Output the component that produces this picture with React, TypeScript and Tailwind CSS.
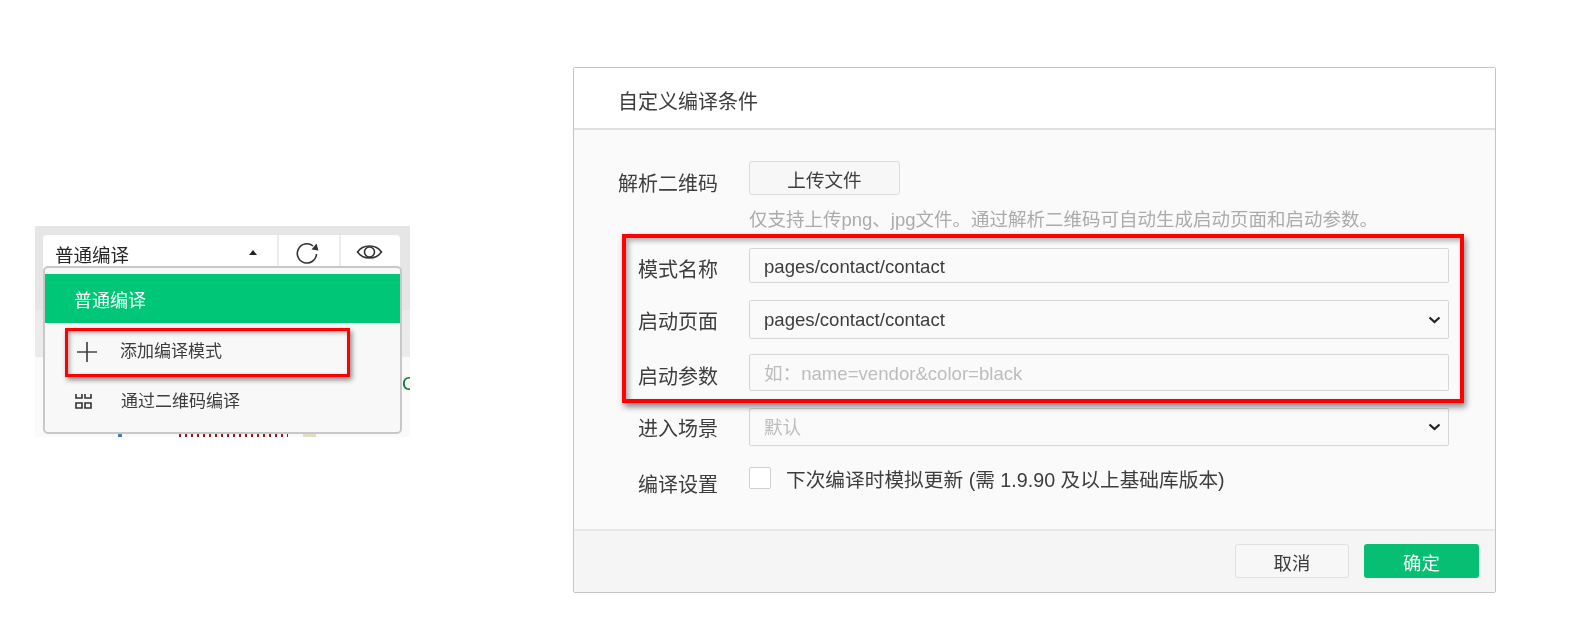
import React from "react";

const sans = "font-['Liberation_Sans','Noto_Sans_CJK_SC',sans-serif]";

function Chevron() {
  return (
    <svg width="13" height="8" viewBox="0 0 13 8" className="shrink-0">
      <path d="M1.5 1.5 L6.5 6 L11.5 1.5" fill="none" stroke="#222" strokeWidth="2.2" />
    </svg>
  );
}

function Row({
  label,
  height,
  top,
  labelClass,
  indent = true,
  children,
}: {
  label: string;
  height: string;
  top: string;
  labelClass: string;
  indent?: boolean;
  children: React.ReactNode;
}) {
  return (
    <div className={`flex ${height} ${top}`}>
      <div className={`w-[131px] shrink-0 text-[20px] leading-[28px] text-[#3d3d3d] ${indent ? "pl-[20px]" : ""} ${labelClass}`}>
        {label}
      </div>
      {children}
    </div>
  );
}

function Field({ children, muted, select, textPad }: { children: React.ReactNode; muted?: boolean; select?: boolean; textPad: string }) {
  return (
    <div className={`flex-1 border border-[#d6d6d6] rounded-[2px] flex items-center justify-between pl-[14px] pr-[7px] text-[18.6px] ${muted ? "text-[#bdbdbd]" : "text-[#3d3d3d]"}`}>
      <span className={textPad}>{children}</span>
      {select && <Chevron />}
    </div>
  );
}

function LeftPanel() {
  return (
    <div className="relative w-[375px] h-[211px] mt-[226px] ml-[35px] shrink-0 overflow-hidden">
      <div className="h-[84px] bg-[#e6e6e6]" />
      <div className="h-[47px] bg-[#ebebeb]" />
      <div className="h-[80px] bg-[#fafafa]" />
      <div className="absolute left-[8px] top-[9px] w-[357px] h-[36px] bg-white rounded-t-[4px] flex items-start">
        <div className="w-[234px] h-full flex items-start justify-between pl-[12px] pr-[20px] pt-[9px]">
          <span className="text-[18.5px] leading-[24px] text-[#262626]">普通编译</span>
          <span className="mt-[6px] w-0 h-0 border-x-[4px] border-x-transparent border-b-[5px] border-b-[#222]" />
        </div>
        <div className="w-[62px] h-full border-l-2 border-[#ececec] flex justify-center pt-[7px] pr-[3px]">
          <svg width="25" height="22" viewBox="0 0 25 22" fill="none" stroke="#333" strokeWidth="1.6">
            <path d="M18 4 A9.6 9.6 0 1 0 21.5 12" />
            <path d="M16.5 7.5 L23.5 8.5 L21.5 1.5 Z" fill="#333" stroke="none" />
          </svg>
        </div>
        <div className="flex-1 h-full border-l-2 border-[#ececec] flex justify-center pt-[8px] pr-[2px]">
          <svg width="27" height="18" viewBox="0 0 27 18" fill="none" stroke="#333" strokeWidth="1.6">
            <path d="M1.5 9 C7 1 20 1 25.5 9 C20 17 7 17 1.5 9 Z" />
            <circle cx="13.5" cy="9" r="5" />
          </svg>
        </div>
      </div>
      <div className="absolute left-[8px] top-[40px] w-[359px] h-[168px] bg-[#f8f8f8] border-2 border-[#c8c8c8] rounded-[5px] overflow-hidden">
        <div className="mt-[6px] h-[49px] bg-[#00c777] flex items-center pl-[29px] pt-[6px] text-[18px] text-white">普通编译</div>
        <div className="h-[49px] mt-[4px] flex items-center">
          <svg width="20" height="20" viewBox="0 0 20 20" className="ml-[32px]" stroke="#444" strokeWidth="1.7">
            <path d="M0 10 H20 M10 0 V20" />
          </svg>
          <span className="ml-[23px] text-[17px] text-[#3d3d3d]">添加编译模式</span>
        </div>
        <div className="h-[49px] pt-[2px] flex items-center">
          <svg width="17" height="15" viewBox="0 0 17 15" className="ml-[30px]" fill="none" stroke="#333" strokeWidth="1.6">
            <path d="M1 0 V4 H7 V0 M10 0 V4 H16 V0 M1 9 H7 V14 H1 Z M10 9 H16 V14 H10 Z" />
          </svg>
          <span className="ml-[29px] text-[17px] text-[#3d3d3d]">通过二维码编译</span>
        </div>
      </div>
      <div className="absolute left-[30px] top-[102px] w-[285px] h-[49px] border-[3px] border-[#f00] shadow-[2px_3px_5px_rgba(0,0,0,0.45),inset_2px_2px_4px_rgba(0,0,0,0.3)]" />
      <span className="absolute left-[367px] top-[148px] text-[19px] leading-[20px] text-[#0a7a3a]">C</span>
      <div className="absolute left-[83px] top-[208px] w-[4px] h-[3px] bg-[#4a7fb5]" />
      <div className="absolute left-[144px] top-[208px] w-[109px] h-[3px] bg-[repeating-linear-gradient(90deg,#8a2020_0_2px,transparent_2px_6px)]" />
      <div className="absolute left-[268px] top-[208px] w-[13px] h-[3px] bg-[#e6dcc0]" />
    </div>
  );
}

function RightPanel() {
  return (
    <div className="relative ml-[163px] mt-[67px] w-[923px] h-[526px] shrink-0 border border-[#c4c4c4] rounded-[2px] bg-[#fafafa] flex flex-col">
      <div className="h-[62px] shrink-0 bg-white border-b-2 border-[#e0e0e0] flex items-center pl-[44px] pt-[7px] text-[20px] text-[#3d3d3d]">
        自定义编译条件
      </div>
      <div className="flex-1 pl-[44px] pr-[46px]">
        <Row label="解析二维码" height="h-[34px]" top="mt-[31px]" labelClass="pt-[9px]" indent={false}>
          <div className="flex-1">
            <button className="w-[151px] h-[34px] pt-[5px] border border-[#dcdcdc] rounded-[3px] bg-[#f7f7f7] text-[18.6px] text-[#3d3d3d]">上传文件</button>
            <div className="mt-[12px] text-[18.5px] leading-[26px] text-[#ababab] whitespace-nowrap">仅支持上传png、jpg文件。通过解析二维码可自动生成启动页面和启动参数。</div>
          </div>
        </Row>
        <Row label="模式名称" height="h-[35px]" top="mt-[53px]" labelClass="pt-[8px]">
          <Field textPad="pt-[3px]">pages/contact/contact</Field>
        </Row>
        <Row label="启动页面" height="h-[39px]" top="mt-[17px]" labelClass="pt-[8px]">
          <Field textPad="pt-[1px]" select>pages/contact/contact</Field>
        </Row>
        <Row label="启动参数" height="h-[37px]" top="mt-[15px]" labelClass="pt-[9px]">
          <Field textPad="pt-[3px]" muted>如：name=vendor&amp;color=black</Field>
        </Row>
        <Row label="进入场景" height="h-[38px]" top="mt-[17px]" labelClass="pt-[7px]">
          <Field textPad="pt-[1px]" muted select>默认</Field>
        </Row>
        <Row label="编译设置" height="h-[22px]" top="mt-[21px]" labelClass="pt-[4px]">
          <div className="flex items-start">
            <span className="w-[22px] h-[22px] border border-[#cfcfcf] rounded-[2px] bg-white" />
            <span className="ml-[15px] mt-[1px] text-[19.7px] leading-[24px] text-[#3d3d3d] whitespace-nowrap">下次编译时模拟更新 (需 1.9.90 及以上基础库版本)</span>
          </div>
        </Row>
      </div>
      <div className="absolute left-[48px] top-[166px] w-[842px] h-[169px] border-[4px] border-[#f00] shadow-[2px_4px_6px_rgba(0,0,0,0.45),inset_3px_3px_5px_rgba(0,0,0,0.3)]" />
      <div className="h-[63px] shrink-0 bg-[#f5f5f5] border-t-2 border-[#e8e8e8] flex items-start justify-end pr-[16px] pt-[13px] gap-[15px]">
        <button className="w-[114px] h-[34px] pt-[5px] border border-[#e0e0e0] rounded-[3px] bg-[#f7f7f7] text-[18.4px] text-[#3d3d3d]">取消</button>
        <button className="w-[115px] h-[34px] pt-[5px] rounded-[3px] bg-[#07bf72] text-[18.4px] text-white">确定</button>
      </div>
    </div>
  );
}

export default function App() {
  return (
    <div className={`${sans} w-[1576px] h-[629px] bg-white flex items-start overflow-hidden blur-[0.35px]`}>
      <LeftPanel />
      <RightPanel />
    </div>
  );
}
